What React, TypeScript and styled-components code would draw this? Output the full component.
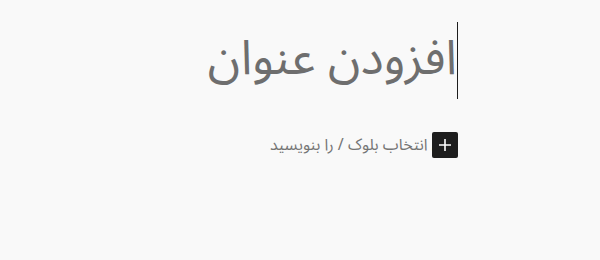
import styled, { createGlobalStyle } from "styled-components";

const GlobalStyle = createGlobalStyle`
  html, body {
    margin: 0;
    padding: 0;
    background: #f9f9f9;
  }
  body {
    font-family: "Noto Sans Arabic", "Noto Sans", sans-serif;
  }
`;

const Canvas = styled.div`
  direction: rtl;
  width: 600px;
  height: 260px;
  background: #f9f9f9;
  padding-top: 22px;
  box-sizing: border-box;
`;

const Column = styled.div`
  width: 316px;
  margin: 0 auto;
`;

const Title = styled.h1`
  margin: 0;
  font-size: 48px;
  font-weight: 400;
  line-height: 74px;
  color: #6e6e6e;
  display: flex;
  align-items: flex-start;
`;

const Caret = styled.span`
  display: inline-block;
  width: 1px;
  height: 77px;
  background: #1e1e1e;
`;

const Block = styled.div`
  position: relative;
  margin-top: 33px;
  height: 26px;
  display: flex;
  align-items: center;
`;

const Placeholder = styled.p`
  margin: 0;
  font-size: 16px;
  color: #757575;
  line-height: 26px;
`;

const Inserter = styled.button`
  position: absolute;
  top: 0;
  right: 0;
  width: 26px;
  height: 26px;
  padding: 0;
  border: none;
  border-radius: 2px;
  background: #1e1e1e;
  color: #fff;
  display: flex;
  align-items: center;
  justify-content: center;
`;

const App = () => {
  return (
    <Canvas>
      <GlobalStyle />
      <Column>
        <Title>
          <Caret />
          افزودن عنوان
        </Title>
        <Block>
          <Placeholder>برای انتخاب بلوک / را بنویسید</Placeholder>
          <Inserter aria-label="افزودن بلوک">
            <svg width="16" height="16" viewBox="0 0 16 16">
              <path d="M8 2v12M2 8h12" stroke="#fff" strokeWidth="1.6" />
            </svg>
          </Inserter>
        </Block>
      </Column>
    </Canvas>
  );
};

export default App;
